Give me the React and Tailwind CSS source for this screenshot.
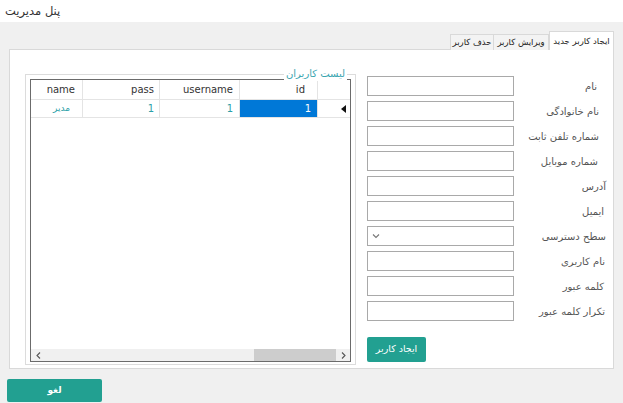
import React from "react";

const FONT = { fontFamily: '"DejaVu Sans", "Noto Sans", sans-serif' };

const labels = [
  ["نام", "pr-[16px]"],
  ["نام خانوادگی", "pr-[14px]"],
  ["شماره تلفن ثابت", "pr-[14px]"],
  ["شماره موبایل", "pr-[15px]"],
  ["آدرس", "pr-[7px]"],
  ["ایمیل", "pr-[9px]"],
  ["سطح دسترسی", "pr-[7px]"],
  ["نام کاربری", "pr-[8px]"],
  ["کلمه عبور", "pr-[9px]"],
  ["تکرار کلمه عبور", "pr-[8px]"],
];

function FormRow({ label, pad, select }) {
  return (
    <div className="flex h-[20px] items-center">
      {select ? (
        <div className="flex h-[20px] w-[147px] items-center border border-[#a9a9a9] bg-white pl-[4px]">
          <svg width="8" height="6" viewBox="0 0 8 6">
            <path d="M1 1.5 L4 4.5 L7 1.5" fill="none" stroke="#777" strokeWidth="1.1" />
          </svg>
        </div>
      ) : (
        <div className="h-[20px] w-[147px] border border-[#a9a9a9] bg-white" />
      )}
      <div className={`flex-1 whitespace-nowrap text-right text-[10px] text-[#555] ${pad}`} dir="rtl">
        {label}
      </div>
    </div>
  );
}

export default function App() {
  return (
    <div className="flex h-[403px] w-[623px] flex-col overflow-hidden bg-[#f0f0f0]" style={FONT}>
      <div className="flex h-[22px] items-center bg-white pl-[5px] pt-[2px]">
        <span dir="rtl" className="text-[11.5px] text-[#333]">پنل مدیریت</span>
      </div>

      <div className="flex flex-1 flex-col pl-[9px] pr-[9px]">
        {/* tabs */}
        <div className="mt-[8px] flex h-[19px] items-end justify-end">
          <div className="relative top-[1px] flex h-[16px] w-[44px] items-center justify-center whitespace-nowrap border border-b-0 border-[#d9d9d9] bg-[#f3f3f3] text-[8.5px] text-[#222]" dir="rtl">
            حذف کاربر
          </div>
          <div className="relative top-[1px] flex h-[16px] w-[55px] items-center justify-center whitespace-nowrap border border-b-0 border-l-0 border-[#d9d9d9] bg-[#f3f3f3] text-[8.5px] text-[#222]" dir="rtl">
            ویرایش کاربر
          </div>
          <div className="relative top-[1px] z-10 flex h-[19px] w-[65px] items-center justify-center whitespace-nowrap border border-b-0 border-[#d9d9d9] bg-white text-[8.5px] text-[#222]" dir="rtl">
            ایجاد کاربر جدید
          </div>
        </div>

        {/* panel */}
        <div className="flex h-[320px] w-[605px] items-start border border-[#d9d9d9] bg-white pl-[15px] pt-[24px]">
          {/* group box */}
          <div className="relative h-[291px] w-[331px] border border-[#dcdcdc] pl-[4px] pr-[4px] pt-[4px]">
            <span dir="rtl" className="absolute right-[8px] top-[-8px] bg-white px-[2px] text-[10px] leading-[14px] text-[#3aa5b0]">
              لیست کاربران
            </span>
            <div className="flex h-[283px] w-[321px] flex-col border border-[#6b6b6b] bg-white">
              {/* header */}
              <div className="flex h-[20px] border-b border-[#e4e4e4] text-[10px] text-[#333]">
                <div className="flex w-[52px] items-center justify-end border-r border-[#e4e4e4] pr-[7px]">name</div>
                <div className="flex w-[77px] items-center justify-end border-r border-[#e4e4e4] pr-[5px]">pass</div>
                <div className="flex w-[80px] items-center justify-end border-r border-[#e4e4e4] pr-[6px]">username</div>
                <div className="flex w-[78px] items-center justify-end border-r border-[#e4e4e4] pr-[12px]">id</div>
                <div className="flex-1" />
              </div>
              {/* data row */}
              <div className="flex h-[18px] border-b border-[#e4e4e4] text-[10px] text-[#2a9fa8]">
                <div dir="rtl" className="flex w-[52px] items-center justify-start border-r border-[#e4e4e4] pr-[12px] text-[9px]">مدیر</div>
                <div className="flex w-[77px] items-center justify-end border-r border-[#e4e4e4] pr-[5px]">1</div>
                <div className="flex w-[80px] items-center justify-end border-r border-[#e4e4e4] pr-[6px]">1</div>
                <div className="flex w-[78px] items-center justify-end border-r border-[#e4e4e4] bg-[#0078d7] pr-[6px] text-white">1</div>
                <div className="flex flex-1 items-center justify-end pr-[4px]">
                  <svg width="5" height="8" viewBox="0 0 5 8">
                    <path d="M5 0 L0 4 L5 8 Z" fill="#111" />
                  </svg>
                </div>
              </div>
              <div className="flex-1" />
              {/* scrollbar */}
              <div className="flex h-[12px] items-center bg-[#f0f0f0]">
                <div className="flex w-[14px] items-center justify-center">
                  <svg width="5" height="7" viewBox="0 0 5 7">
                    <path d="M4 0.5 L1 3.5 L4 6.5" fill="none" stroke="#555" strokeWidth="1.1" />
                  </svg>
                </div>
                <div className="flex h-full flex-1 justify-end">
                  <div className="h-full w-[82px] bg-[#cdcdcd]" />
                </div>
                <div className="flex w-[14px] items-center justify-center">
                  <svg width="5" height="7" viewBox="0 0 5 7">
                    <path d="M1 0.5 L4 3.5 L1 6.5" fill="none" stroke="#555" strokeWidth="1.1" />
                  </svg>
                </div>
              </div>
            </div>
          </div>

          {/* form */}
          <div className="ml-[11px] mt-[2px] flex flex-1 flex-col gap-[5px]">
            {labels.map(([l, p], i) => (
              <FormRow key={i} label={l} pad={p} select={i === 6} />
            ))}
            <div className="mt-[11px] flex">
              <button dir="rtl" className="h-[25px] w-[59px] rounded-[2px] bg-[#22a091] text-[9.5px] text-white">
                ایجاد کاربر
              </button>
            </div>
          </div>
        </div>

        <div className="-ml-[2px] mt-[7px]">
          <button dir="rtl" className="h-[23px] w-[95px] rounded-[2px] bg-[#22a091] text-[9px] font-bold text-white">
            لغو
          </button>
        </div>
      </div>
    </div>
  );
}
